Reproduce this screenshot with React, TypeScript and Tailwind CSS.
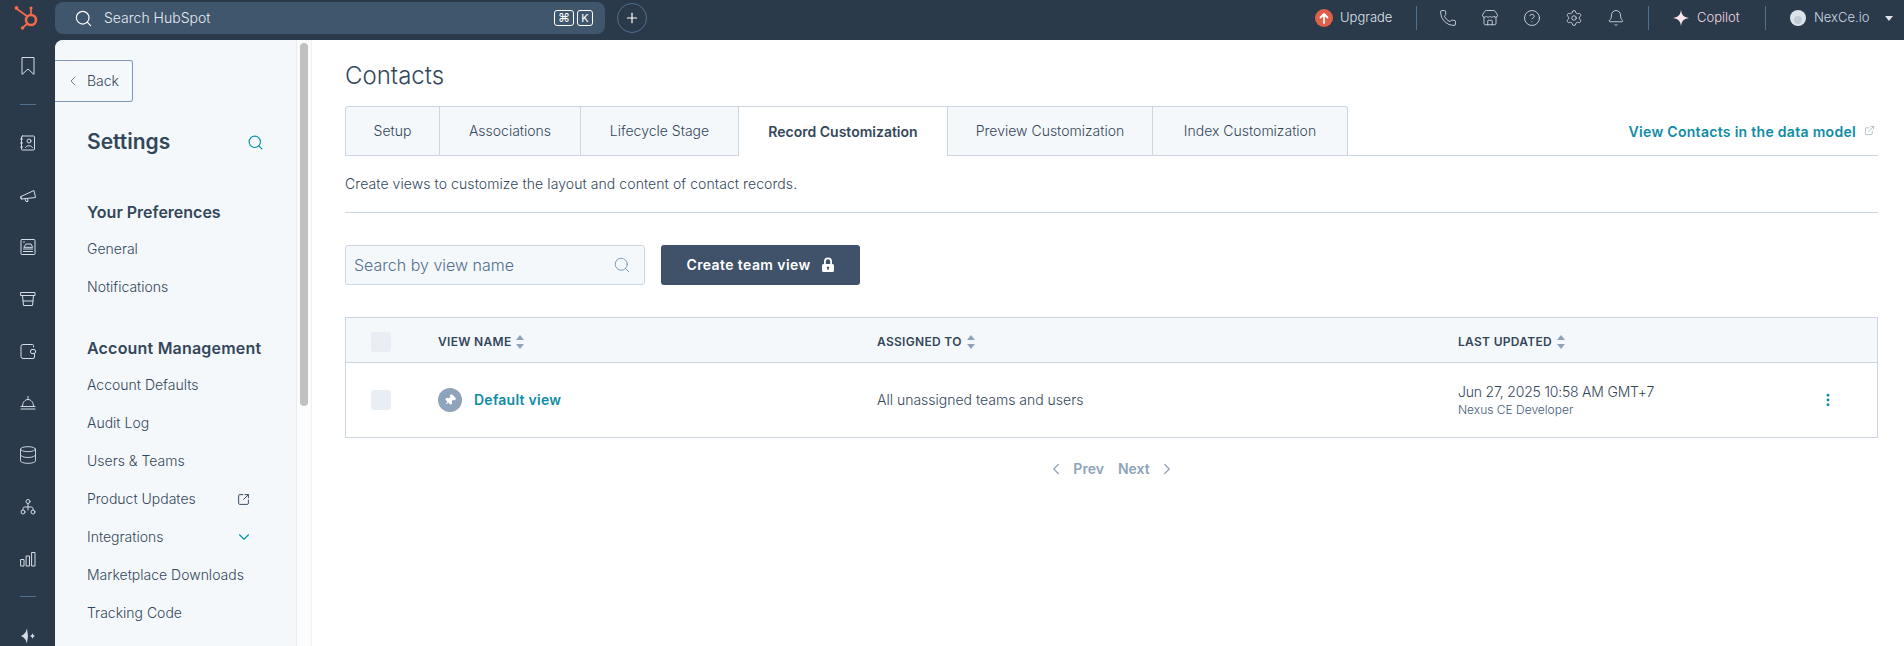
import type { ReactNode } from 'react'
import {
  Bell,
  ChevronDown,
  ChevronLeft,
  ChevronRight,
  CircleHelp,
  Database,
  ExternalLink,
  EllipsisVertical,
  Phone,
  Pin,
  Plus,
  Search,
  Settings,
  SquareArrowOutUpRight,
  Store,
} from 'lucide-react'

const fontClassName = "font-['Inter','Noto_Sans',sans-serif]"

function RailSvg({ children }: { children: ReactNode }) {
  return (
    <svg width="20" height="20" viewBox="0 0 20 20" fill="none" stroke="currentColor" strokeWidth="1" strokeLinecap="round" strokeLinejoin="round">
      {children}
    </svg>
  )
}

function HubSpotLogo() {
  return (
    <svg width="28" height="26" viewBox="0 0 28 26" fill="none" stroke="#f4694b" strokeLinecap="round">
      <circle cx="17" cy="15" r="5" strokeWidth="2.6" />
      <path d="M17 10V4" strokeWidth="1.8" />
      <path d="M13.5 11.5L3 4" strokeWidth="1.8" />
      <path d="M13.5 18.5L9 22.5" strokeWidth="1.8" />
      <circle cx="17" cy="3" r="1.6" fill="#f4694b" stroke="none" />
      <circle cx="2.5" cy="3" r="1.9" fill="#f4694b" stroke="none" />
      <circle cx="8.5" cy="23" r="1.7" fill="#f4694b" stroke="none" />
    </svg>
  )
}

const railIcons = [
  <RailSvg key="contacts">
    <rect x="3.5" y="3" width="13" height="14" rx="1" />
    <circle cx="11" cy="8" r="2" />
    <path d="M7.5 14.5c.4-2.4 6.6-2.4 7 0" />
    <path d="M2.5 6h2M2.5 10h2M2.5 14h2" />
  </RailSvg>,
  <RailSvg key="marketing">
    <path d="M3 11.5L16 5.5l1.500 7L3.500 14z" />
    <path d="M3 11.500l.5 2.500" />
    <path d="M7 14l1 2.500h2l-.5-3" />
  </RailSvg>,
  <RailSvg key="content">
    <rect x="3" y="2.500" width="14" height="15" rx="1" />
    <path d="M6 10l2-3h5l1.500 3z" />
    <path d="M5.500 5h1" />
    <path d="M5.500 12h9M5.500 14.500h9" />
  </RailSvg>,
  <RailSvg key="commerce">
    <path d="M3 3.500h14v3H3z" />
    <path d="M4.500 6.500l1 10h9l1-10" />
    <path d="M5 12h10" />
  </RailSvg>,
  <RailSvg key="wallet">
    <path d="M15.500 6V4.500a1 1 0 0 0-1-1H5a2 2 0 0 0-2 2v10a2 2 0 0 0 2 2h10a1.500 1.500 0 0 0 1.500-1.500V13" />
    <rect x="12.500" y="8.500" width="5" height="4" rx="1.500" />
  </RailSvg>,
  <RailSvg key="service">
    <path d="M10 3.500v2" />
    <path d="M4.500 13c0-3.500 2.500-6.500 5.500-6.500s5.500 3 5.500 6.500" />
    <path d="M3 16h14M3 13.500h14" />
  </RailSvg>,
  <Database key="data" size={20} strokeWidth={1.1} />,
  <RailSvg key="automation">
    <circle cx="10" cy="4.500" r="2" />
    <circle cx="5" cy="15" r="2" />
    <circle cx="15" cy="15" r="2" />
    <path d="M10 6.500V13M5 13v-1.500c0-1 .8-1.500 1.500-1.500h7c.7 0 1.500.5 1.500 1.500V13" />
  </RailSvg>,
  <RailSvg key="reports">
    <rect x="3" y="10.500" width="3" height="6.500" />
    <rect x="8.500" y="7" width="3" height="10" />
    <rect x="14" y="3.500" width="3" height="13.500" />
  </RailSvg>,
]

function Rail() {
  return (
    <div className="flex w-[55px] shrink-0 flex-col items-center text-[#d5dce5]">
      <div className="mt-4 flex h-5 items-center justify-center">
        <svg width="18" height="20" viewBox="0 0 18 20" fill="none" stroke="currentColor" strokeWidth="1">
          <path d="M3 1.500h12v17L9 13l-6 5.500z" />
        </svg>
      </div>
      <div className="mt-[28px] h-px w-4 bg-[#516f90]" />
      {railIcons.map((icon, index) => (
        <div key={index} className={`flex h-5 items-center justify-center ${index === 0 ? 'mt-[28px]' : 'mt-[32px]'}`}>
          {icon}
        </div>
      ))}
      <div className="mt-[27px] h-px w-4 bg-[#516f90]" />
      <div className="mt-[29px] flex h-5 items-center justify-center">
        <svg width="20" height="20" viewBox="0 0 20 20" fill="currentColor">
          <path d="M9 2c.5 5 1 7 1 8s-.500 3-1 8c-.5-3-2-6.500-6-8 4-1.500 5.500-5 6-8z" />
          <path d="M14.500 7c.3 1.700 1 2.500 2.500 3-1.500.5-2.200 1.300-2.500 3-.3-1.700-1-2.500-2.500-3 1.500-.5 2.200-1.300 2.500-3z" />
        </svg>
      </div>
    </div>
  )
}

function TopBar() {
  return (
    <div className="flex h-10 shrink-0 items-center bg-[#2a3a4b] pb-1 text-[#dfe3eb]">
      <div className="flex w-[55px] shrink-0 justify-center pl-px">
        <HubSpotLogo />
      </div>
      <div className="flex h-8 w-[550px] items-center rounded-lg bg-[#3f566d] pl-[19px] pr-3">
        <Search size={19} strokeWidth={1.5} className="text-white" />
        <span className="ml-[11px] text-sm font-light text-[#e5ebf1]">Search HubSpot</span>
        <span className="ml-auto flex h-4 w-5 items-center justify-center rounded-[3px] border border-white text-[12px] leading-none text-white">⌘</span>
        <span className="ml-[3px] flex h-4 w-4 items-center justify-center rounded-[3px] border border-white text-[11px] leading-none text-white">K</span>
      </div>
      <div className="ml-3 flex h-[30px] w-[30px] items-center justify-center rounded-full border border-[#516f90] text-white">
        <Plus size={16} strokeWidth={1.8} />
      </div>

      <div className="ml-auto flex items-center pr-[11px] text-[13px] font-light">
        <div className="flex h-[18px] w-[18px] items-center justify-center rounded-full bg-[#e0604a] text-white">
          <svg width="10" height="12" viewBox="0 0 10 12" fill="none" stroke="currentColor" strokeWidth="1.800" strokeLinecap="round" strokeLinejoin="round">
            <path d="M5 11V2M1.500 5.500L5 2l3.500 3.500" />
          </svg>
        </div>
        <span className="ml-[7px] w-[54px]">Upgrade</span>
        <div className="ml-[22px] h-[24px] w-px bg-[#516f90]" />
        <div className="ml-[22px] flex items-center gap-[24px]">
          <Phone size={18} strokeWidth={1.1} />
          <Store size={18} strokeWidth={1.1} />
          <CircleHelp size={18} strokeWidth={1.1} />
          <Settings size={18} strokeWidth={1.1} />
          <Bell size={18} strokeWidth={1.1} />
        </div>
        <div className="ml-[23px] h-[24px] w-px bg-[#516f90]" />
        <svg className="ml-[24px] text-[#fce4ec]" width="16" height="16" viewBox="0 0 16 16" fill="currentColor">
          <path d="M8 0c.7 4.500 2 6.800 8 8-6 1.200-7.300 3.500-8 8-.7-4.500-2-6.800-8-8 6-1.200 7.300-3.500 8-8z" />
        </svg>
        <span className="ml-2 w-[46px] text-[#f5d7e1]">Copilot</span>
        <div className="ml-[22px] h-[24px] w-px bg-[#516f90]" />
        <div className="ml-[24px] flex h-4 w-4 items-center justify-center rounded-full bg-[#dde3ea]">
          <div className="mt-1 h-2 w-2 rounded-full bg-[#c2ccd6]" />
        </div>
        <span className="ml-2 w-[60px] text-[#cbd6e2]">NexCe.io</span>
        <span className="ml-[11px] h-0 w-0 border-x-[4px] border-t-[5px] border-x-transparent border-t-[#dfe3eb]" />
      </div>
    </div>
  )
}

function NavLink({ children, icon }: { children: ReactNode; icon?: ReactNode }) {
  return (
    <div className="flex h-[38px] items-center text-sm font-light whitespace-nowrap text-[#33475b]">
      <span className="w-[151px]">{children}</span>
      {icon}
    </div>
  )
}

function SettingsPanel() {
  return (
    <div className="flex w-[242px] shrink-0 flex-col rounded-tl-lg border-r border-[#e8edf2] bg-[#f5f8fa]">
      <div className="mt-5 flex h-[42px] w-[78px] shrink-0 items-center rounded-r-[3px] border border-l-0 border-[#7c98b6] bg-[#f5f8fa] pl-[10px] text-sm font-light text-[#33475b]">
        <ChevronLeft size={16} strokeWidth={1.3} className="text-[#516f90]" />
        <span className="ml-[6px]">Back</span>
      </div>
      <div className="shrink-0 pl-8">
        <div className="mt-[26px] flex h-7 items-center">
          <span className="w-[160px] text-[21px] font-semibold text-[#33475b]">Settings</span>
          <Search size={17} strokeWidth={1.6} className="text-[#0091ae]" />
        </div>
        <div className="mt-[44px] flex h-6 items-center text-base font-semibold text-[#33475b]">Your Preferences</div>
        <div className="mt-[6px]">
          <NavLink>General</NavLink>
          <NavLink>Notifications</NavLink>
        </div>
        <div className="mt-[30px] flex h-6 items-center text-base font-semibold tracking-[0.2px] text-[#33475b]">Account Management</div>
        <div className="mt-[6px]">
          <NavLink>Account Defaults</NavLink>
          <NavLink>Audit Log</NavLink>
          <NavLink>Users &amp; Teams</NavLink>
          <NavLink icon={<SquareArrowOutUpRight size={13} strokeWidth={1.8} className="ml-[-1px] text-[#33475b]" />}>Product Updates</NavLink>
          <NavLink icon={<ChevronDown size={18} strokeWidth={1.5} className="ml-[-3px] text-[#0091ae]" />}>Integrations</NavLink>
          <NavLink>Marketplace Downloads</NavLink>
          <NavLink>Tracking Code</NavLink>
        </div>
      </div>
    </div>
  )
}

function Scrollbar() {
  return (
    <div className="flex w-[15px] shrink-0 justify-center border-r border-[#eef1f5] bg-[#fbfcfd]">
      <div className="mt-[3px] h-[363px] w-2 rounded-full bg-[#c1c1c1]" />
    </div>
  )
}

const tabs = [
  { label: 'Setup', width: 'w-[95px]' },
  { label: 'Associations', width: 'w-[141px]' },
  { label: 'Lifecycle Stage', width: 'w-[158px]' },
  { label: 'Record Customization', width: 'w-[209px]', active: true },
  { label: 'Preview Customization', width: 'w-[205px]' },
  { label: 'Index Customization', width: 'w-[195px]' },
]

function Tabs() {
  return (
    <div className="flex h-[50px] items-stretch border-b border-[#cbd6e2]">
      {tabs.map((tab, index) => (
        <div
          key={tab.label}
          className={`flex items-center justify-center border-t border-r border-[#cbd6e2] text-sm ${tab.width} ${index === 0 ? 'rounded-tl-[3px] border-l' : ''} ${index === tabs.length - 1 ? 'rounded-tr-[3px]' : ''} ${
            tab.active ? '-mb-px bg-white font-semibold text-[#33475b]' : 'bg-[#f5f8fa] font-light text-[#33475b]'
          }`}
        >
          {tab.label}
        </div>
      ))}
      <div className="ml-auto flex items-center pt-[2px] pr-[3px] text-sm font-semibold tracking-[0.3px] text-[#0e8ca5]">
        View Contacts in the data model
        <ExternalLink size={11} strokeWidth={1.2} className="mb-[3px] ml-[8px] text-[#7c98b6]" />
      </div>
    </div>
  )
}

function SortIcon() {
  return (
    <svg className="ml-[5px]" width="8" height="14" viewBox="0 0 8 14" fill="#8fa3ba">
      <path d="M4 0l4 5H0zM4 14l4-5H0z" />
    </svg>
  )
}

function HeaderCell({ children }: { children: ReactNode }) {
  return (
    <div className="flex items-center text-xs font-semibold tracking-[0.3px] text-[#33475b]">
      {children}
      <SortIcon />
    </div>
  )
}

function ViewsTable() {
  return (
    <div className="mt-8 border border-[#cbd6e2]">
      <div className="grid h-[45px] grid-cols-[92px_439px_581px_1fr] items-center border-b border-[#cbd6e2] bg-[#f5f8fa] pt-1">
        <div className="pl-[25px]">
          <div className="h-5 w-5 rounded-[3px] bg-[#e8eef4]" />
        </div>
        <HeaderCell>VIEW NAME</HeaderCell>
        <HeaderCell>ASSIGNED TO</HeaderCell>
        <HeaderCell>LAST UPDATED</HeaderCell>
      </div>
      <div className="grid h-[74px] grid-cols-[92px_439px_581px_1fr] items-center">
        <div className="pl-[25px]">
          <div className="h-5 w-5 rounded-[3px] bg-[#e8eef4]" />
        </div>
        <div className="flex items-center">
          <div className="flex h-6 w-6 items-center justify-center rounded-full bg-[#8fa3ba]">
            <Pin size={12} strokeWidth={2} fill="white" className="rotate-45 text-white" />
          </div>
          <span className="ml-3 text-sm font-semibold tracking-[0.25px] text-[#0e8ca5]">Default view</span>
        </div>
        <div className="text-sm font-light text-[#33475b]">All unassigned teams and users</div>
        <div className="flex items-center">
          <div className="w-[200px]">
            <div className="text-sm leading-[18px] font-light tracking-[-0.2px] whitespace-nowrap text-[#33475b]">Jun 27, 2025 10:58 AM GMT+7</div>
            <div className="text-xs leading-[17px] font-light text-[#425b76]">Nexus CE Developer</div>
          </div>
          <EllipsisVertical size={16} strokeWidth={2.4} className="ml-[162px] text-[#0e8ca5]" />
        </div>
      </div>
    </div>
  )
}

export default function App() {
  return (
    <div className={`flex h-[646px] w-[1904px] flex-col overflow-hidden bg-[#2a3a4b] ${fontClassName}`}>
      <TopBar />
      <div className="flex min-h-0 flex-1">
        <Rail />
        <div className="flex min-w-0 flex-1 overflow-hidden rounded-tl-lg bg-white">
          <SettingsPanel />
          <Scrollbar />
          <main className="min-w-0 flex-1 pr-[26px] pl-[33px]">
            <h1 className="mt-[22px] text-2xl leading-7 font-light text-[#33475b]">Contacts</h1>
            <div className="mt-4">
              <Tabs />
            </div>
            <p className="mt-[18px] text-sm leading-5 font-light tracking-[0.08px] text-[#33475b]">Create views to customize the layout and content of contact records.</p>
            <div className="mt-[18px] h-px bg-[#cbd6e2]" />
            <div className="mt-8 flex gap-4">
              <div className="flex h-10 w-[300px] items-center rounded-[3px] border border-[#cbd6e2] bg-[#f5f8fa] pr-[13px] pl-2">
                <span className="text-base font-light text-[#516f90]">Search by view name</span>
                <Search size={18} strokeWidth={1.3} className="ml-auto text-[#7c98b6]" />
              </div>
              <button type="button" className="flex h-10 w-[199px] items-center justify-center rounded-[3px] bg-[#3f5269] text-sm font-semibold tracking-[0.4px] text-white">
                Create team view
                <svg className="ml-[10px]" width="14" height="16" viewBox="0 0 14 16" fill="currentColor">
                  <path fillRule="evenodd" d="M3 7V4.500a4 4 0 0 1 8 0V7h.5A1.500 1.500 0 0 1 13 8.500v5a1.500 1.500 0 0 1-1.500 1.500h-9A1.500 1.500 0 0 1 1 13.500v-5A1.500 1.500 0 0 1 2.500 7zm1.800 0h4.400V4.500a2.200 2.200 0 0 0-4.400 0zM7 9.500a1.200 1.200 0 0 0-.6 2.240V13h1.200v-1.260A1.200 1.200 0 0 0 7 9.500z" />
                </svg>
              </button>
            </div>
            <ViewsTable />
            <div className="mt-[21px] flex items-center justify-center text-sm font-semibold text-[#8fa3ba]">
              <ChevronLeft size={18} strokeWidth={1.6} />
              <span className="ml-[8px]">Prev</span>
              <span className="ml-[14px]">Next</span>
              <ChevronRight size={18} strokeWidth={1.6} className="ml-[8px]" />
            </div>
          </main>
        </div>
      </div>
    </div>
  )
}
